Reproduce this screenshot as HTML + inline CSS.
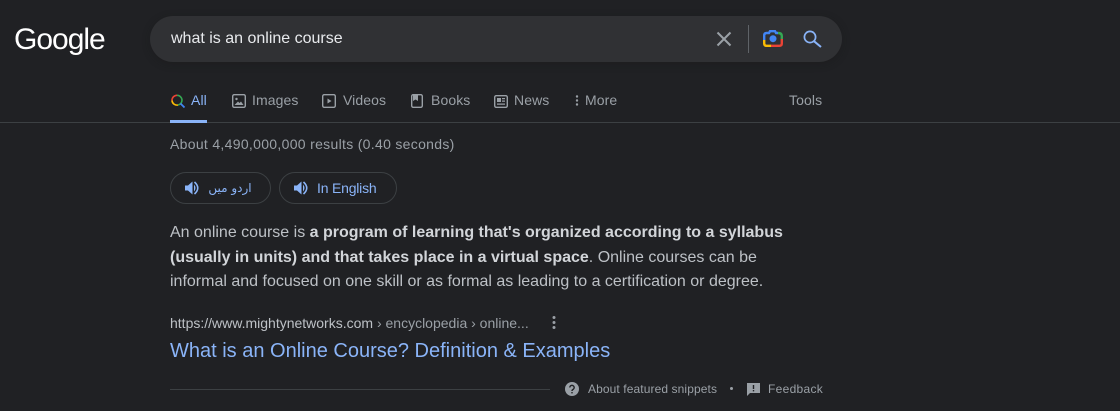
<!DOCTYPE html>
<html><head><meta charset="utf-8"><style>
html,body{margin:0;padding:0;background:#202124;width:1120px;height:411px;overflow:hidden}
body{font-family:"Liberation Sans",Arial,sans-serif;position:relative}
.a{position:absolute;white-space:nowrap}
svg{position:absolute;display:block}
.tab{font-size:14px;color:#9aa0a6;top:92px;line-height:16px;letter-spacing:.1px}
.ic{fill:#9aa0a6}
.pill{position:absolute;top:172px;height:30px;border:1px solid #3c4043;border-radius:16px;box-sizing:content-box}
</style></head><body>
<div class="a" style="left:14px;top:21px;font-size:30px;line-height:38px;color:#fff;letter-spacing:-1px">Google</div>
<div class="a" style="left:150px;top:16px;width:692px;height:46px;background:#303134;border-radius:23px;box-shadow:0 2px 8px rgba(23,23,23,.35)"></div>
<div class="a" style="left:171px;top:30px;font-size:16px;line-height:18px;color:#e8eaed">what is an online course</div>
<svg style="left:714px;top:29px" width="20" height="20" viewBox="0 0 20 20"><path d="M3.500 3.500L16.500 16.500M16.500 3.500L3.500 16.500" stroke="#9aa0a6" stroke-width="2"/></svg>
<div class="a" style="left:748px;top:25px;width:1px;height:28px;background:#5f6368"></div>
<svg style="left:762px;top:29px" width="22" height="20" viewBox="0 0 22 20" fill="none" stroke-width="2.400">
<path d="M2.200 11V6.500Q2.200 4 4.700 4H7L8 2.200H13L14 4H16" stroke="#4285f4"/><path d="M16 4Q19.800 4 19.800 7V10" stroke="#34a853"/><path d="M19.800 10V14.500Q19.800 16.800 17.500 16.800H9" stroke="#ea4335"/><path d="M9 16.800H4.500Q2.200 16.800 2.200 14.500V11" stroke="#fbbc04"/><circle cx="11" cy="9.700" r="3.500" fill="#4285f4" stroke="none"/></svg>
<svg style="left:802px;top:29px" width="20" height="20" viewBox="0 0 20 20" fill="none" stroke="#8ab4f8"><circle cx="8" cy="8" r="5.600" stroke-width="1.700"/><path d="M12 12.200L19 18" stroke-width="2"/></svg>

<svg style="left:170px;top:93px" width="16" height="16" viewBox="0 0 16 16" fill="none" stroke-width="1.600"><path d="M2 7.500A5 5 0 0 1 7 2.300" stroke="#ea4335"/><path d="M7 2.300A5 5 0 0 1 12 7" stroke="#34a853"/><path d="M12 7A5 5 0 0 1 8 12" stroke="#34a853"/><path d="M8 12A5 5 0 0 1 2 7.500" stroke="#fbbc04"/><path d="M10.500 10.500L14.500 14.500" stroke="#4285f4" stroke-width="1.800"/></svg>
<div class="a tab" style="left:191px;color:#8ab4f8">All</div>

<svg style="left:232px;top:94px" width="14" height="14" viewBox="0 0 14 14"><rect x=".7" y=".7" width="12.600" height="12.600" rx="1.500" fill="none" stroke="#9aa0a6" stroke-width="1.400"/><circle cx="4.500" cy="5" r="1.200" class="ic"/><path d="M2.500 11L6 7.500L7.500 9L9 7.500L11.500 11Z" class="ic"/></svg>
<div class="a tab" style="left:252px">Images</div>
<svg style="left:322px;top:94px" width="14" height="14" viewBox="0 0 14 14"><rect x=".7" y=".7" width="12.600" height="12.600" rx="1.500" fill="none" stroke="#9aa0a6" stroke-width="1.400"/><path d="M5.500 4.500L9.500 7L5.500 9.500Z" class="ic"/></svg>
<div class="a tab" style="left:343px">Videos</div>
<svg style="left:411px;top:94px" width="12" height="14" viewBox="0 0 12 14"><rect x=".7" y=".7" width="10.600" height="12.600" rx="1.500" fill="none" stroke="#9aa0a6" stroke-width="1.400"/><path d="M2 1H7V7L4.500 5.500L2 7Z" class="ic"/></svg>
<div class="a tab" style="left:431px">Books</div>
<svg style="left:494px;top:95px" width="14" height="13" viewBox="0 0 14 13"><rect x=".7" y=".7" width="12.600" height="11.600" rx="1.500" fill="none" stroke="#9aa0a6" stroke-width="1.400"/><path d="M3 3H7V7H3ZM8 3H11V4.200H8ZM8 5.500H11V6.700H8ZM3 8.500H11V9.700H3Z" class="ic"/></svg>
<div class="a tab" style="left:514px">News</div>
<svg style="left:574px;top:94px" width="6" height="14" viewBox="0 0 6 14"><circle cx="3" cy="2.500" r="1.200" class="ic"/><circle cx="3" cy="6.500" r="1.200" class="ic"/><circle cx="3" cy="10.500" r="1.200" class="ic"/></svg>
<div class="a tab" style="left:585px">More</div>
<div class="a tab" style="left:789px">Tools</div>
<div class="a" style="left:0;top:122px;width:1120px;height:1px;background:#3c4043"></div>
<div class="a" style="left:170px;top:120px;width:37px;height:3px;background:#8ab4f8"></div>

<div class="a" style="left:170px;top:136px;font-size:14px;line-height:16px;color:#9aa0a6;letter-spacing:.31px">About 4,490,000,000 results (0.40 seconds)</div>

<div class="pill" style="left:170px;width:99px"></div>
<div class="pill" style="left:279px;width:116px"></div>
<svg style="left:184px;top:180px" width="16" height="16" viewBox="0 0 16 16" fill="#8ab4f8"><path d="M1 5.500H4L8.500 1.500V14.500L4 10.500H1Z"/><path d="M10 4.500Q13 8 10 11.500Z"/><path d="M10.500 2Q17 8 10.500 14" fill="none" stroke="#8ab4f8" stroke-width="1.600"/></svg>
<div class="a" style="left:207px;top:180px;width:46px;text-align:center;font-family:'DejaVu Sans',sans-serif;font-size:12px;line-height:16px;color:#8ab4f8" dir="rtl">اردو میں</div>
<svg style="left:293px;top:180px" width="16" height="16" viewBox="0 0 16 16" fill="#8ab4f8"><path d="M1 5.500H4L8.500 1.500V14.500L4 10.500H1Z"/><path d="M10 4.500Q13 8 10 11.500Z"/><path d="M10.500 2Q17 8 10.500 14" fill="none" stroke="#8ab4f8" stroke-width="1.600"/></svg>
<div class="a" style="left:317px;top:180px;font-size:14px;line-height:17px;color:#8ab4f8;letter-spacing:-.2px">In English</div>

<div class="a" style="left:170px;top:220px;font-size:16px;line-height:25px;color:#bdc1c6">An online course is <b style="color:#d2d5d9">a program of learning that's organized according to a syllabus</b></div>
<div class="a" style="left:170px;top:245px;font-size:16px;line-height:25px;color:#bdc1c6"><b style="color:#d2d5d9">(usually in units) and that takes place in a virtual space</b>. Online courses can be</div>
<div class="a" style="left:170px;top:269px;font-size:16px;line-height:25px;color:#bdc1c6">informal and focused on one skill or as formal as leading to a certification or degree.</div>

<div class="a" style="left:170px;top:315px;font-size:14px;line-height:16px;color:#bdc1c6">https://www.mightynetworks.com<span style="color:#9aa0a6"> › encyclopedia › online...</span></div>
<svg style="left:551px;top:315px" width="6" height="15" viewBox="0 0 6 15"><circle cx="3" cy="2.500" r="1.500" class="ic"/><circle cx="3" cy="7.500" r="1.500" class="ic"/><circle cx="3" cy="12.500" r="1.500" class="ic"/></svg>
<div class="a" style="left:170px;top:338px;font-size:20px;line-height:26px;color:#8ab4f8">What is an Online Course? Definition &amp; Examples</div>

<div class="a" style="left:170px;top:389px;width:380px;height:1px;background:#3c4043"></div>
<svg style="left:565px;top:382px" width="14" height="14" viewBox="0 0 14 14"><circle cx="7" cy="7" r="7" class="ic"/><path d="M4.800 5.500A2.200 2.200 0 1 1 8.300 7.300Q7 8 7 9" fill="none" stroke="#202124" stroke-width="1.400"/><rect x="6.300" y="10" width="1.400" height="1.400" fill="#202124"/></svg>
<div class="a" style="left:588px;top:381px;font-size:12px;line-height:16px;color:#9aa0a6;letter-spacing:.1px">About featured snippets</div>
<div class="a" style="left:730px;top:387px;width:3px;height:3px;border-radius:50%;background:#9aa0a6"></div>
<svg style="left:747px;top:383px" width="13" height="13" viewBox="0 0 13 13"><path d="M0 0H13V10H3L0 13Z" class="ic"/><rect x="5.800" y="2" width="1.400" height="4" fill="#202124"/><rect x="5.800" y="7" width="1.400" height="1.400" fill="#202124"/></svg>
<div class="a" style="left:768px;top:381px;font-size:12px;line-height:16px;color:#9aa0a6;letter-spacing:.3px">Feedback</div>
</body></html>
